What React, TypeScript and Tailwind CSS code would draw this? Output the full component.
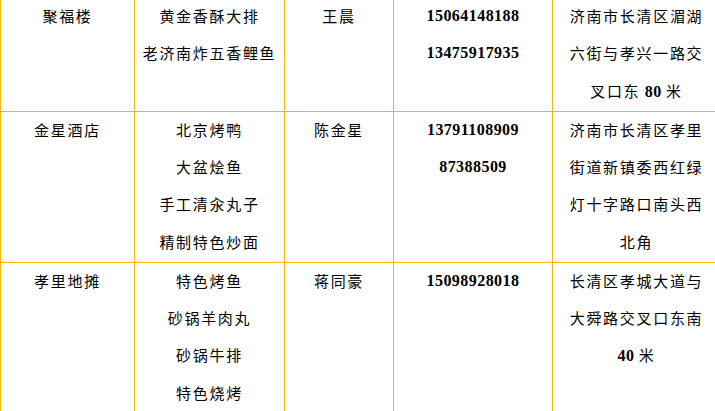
const rows = [
  {
    name: "聚福楼",
    dishes: ["黄金香酥大排", "老济南炸五香鲤鱼"],
    contact: "王晨",
    phones: ["15064148188", "13475917935"],
    address: [["济南市长清区湄湖"], ["六街与孝兴一路交"], ["叉口东", " 80 ", "米"]],
  },
  {
    name: "金星酒店",
    dishes: ["北京烤鸭", "大盆烩鱼", "手工清汆丸子", "精制特色炒面"],
    contact: "陈金星",
    phones: ["13791108909", "87388509"],
    address: [["济南市长清区孝里"], ["街道新镇委西红绿"], ["灯十字路口南头西"], ["北角"]],
  },
  {
    name: "孝里地摊",
    dishes: ["特色烤鱼", "砂锅羊肉丸", "砂锅牛排", "特色烧烤"],
    contact: "蒋同豪",
    phones: ["15098928018"],
    address: [["长清区孝城大道与"], ["大舜路交叉口东南"], ["", "40 ", "米"]],
  },
];

const cjk = "[font-family:'Noto_Sans_CJK_SC',sans-serif] text-[15px] tracking-[1.7px] text-black";
const num = "[font-family:'Liberation_Serif',serif] font-bold text-[16px] tracking-[0.45px] text-black";

const Line = ({ children }: { children: React.ReactNode }) => (
  <div className="h-[37.25px] whitespace-nowrap leading-[33px]">{children}</div>
);

const Cell = ({ children, className = "" }: { children: React.ReactNode; className?: string }) => (
  <div className={`border-l border-[#F5B800] pt-px text-center ${className}`}>{children}</div>
);

export default function App() {
  return (
    <div className="w-[715px] h-[411px] overflow-hidden bg-white">
      <div className="w-[720px] -mt-[2px]">
        {rows.map((row, i) => (
          <div
            key={row.name}
            className={`grid grid-cols-[134px_150px_109px_159px_168px] ${
              i > 0 ? "border-t border-[#F5B800]" : ""
            }`}
          >
            <Cell className={cjk}>
              <Line>{row.name}</Line>
            </Cell>
            <Cell className={cjk}>
              {row.dishes.map((d) => (
                <Line key={d}>{d}</Line>
              ))}
            </Cell>
            <Cell className={cjk}>
              <Line>{row.contact}</Line>
            </Cell>
            <Cell className={num}>
              {row.phones.map((p) => (
                <Line key={p}>{p}</Line>
              ))}
            </Cell>
            <Cell className={cjk}>
              {row.address.map((line, j) => (
                <Line key={j}>
                  {line[0]}
                  {line[1] && <span className={num}>{line[1]}</span>}
                  {line[2]}
                </Line>
              ))}
            </Cell>
          </div>
        ))}
      </div>
    </div>
  );
}
